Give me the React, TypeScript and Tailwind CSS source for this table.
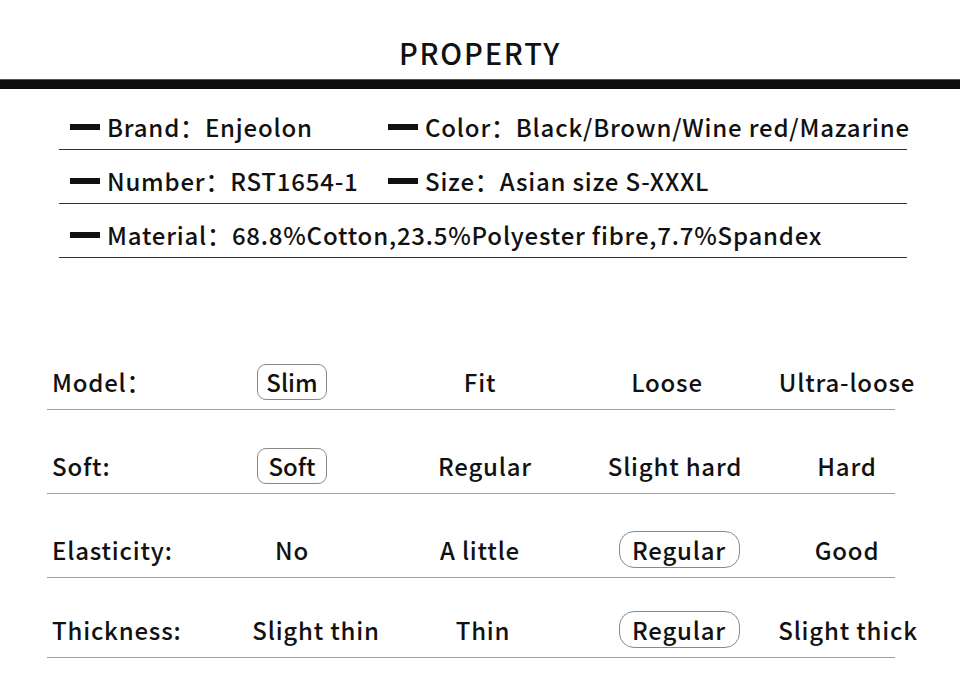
const font = { fontFamily: '"Noto Sans CJK SC", "Noto Sans", sans-serif' };

type Info = { label: string; value: string };

const infoRows: Info[][] = [
  [
    { label: "Brand", value: "Enjeolon" },
    { label: "Color", value: "Black/Brown/Wine red/Mazarine" },
  ],
  [
    { label: "Number", value: "RST1654-1" },
    { label: "Size", value: "Asian size S-XXXL" },
  ],
  [{ label: "Material", value: "68.8%Cotton,23.5%Polyester fibre,7.7%Spandex" }],
];

type Cell = { text: string; pill?: "sm" | "lg"; shift?: string };

const specRows: { label: string; cells: Cell[] }[] = [
  {
    label: "Model：",
    cells: [{ text: "Slim", pill: "sm" }, { text: "Fit" }, { text: "Loose", shift: "pr-[16px]" }, { text: "Ultra-loose" }],
  },
  {
    label: "Soft:",
    cells: [{ text: "Soft", pill: "sm" }, { text: "Regular", shift: "pl-[10px]" }, { text: "Slight hard" }, { text: "Hard" }],
  },
  {
    label: "Elasticity:",
    cells: [{ text: "No" }, { text: "A little" }, { text: "Regular", pill: "lg", shift: "pl-[8px]" }, { text: "Good" }],
  },
  {
    label: "Thickness:",
    cells: [{ text: "Slight thin", shift: "pl-[48px]" }, { text: "Thin", shift: "pl-[6px]" }, { text: "Regular", pill: "lg", shift: "pl-[8px]" }, { text: "Slight thick", shift: "pl-[2px]" }],
  },
];

function Dash() {
  return <span className="inline-block w-[30px] h-[6px] bg-[#111] mr-[7px] shrink-0" />;
}

function Value({ cell }: { cell: Cell }) {
  if (cell.pill === "sm") {
    return (
      <span className="flex items-center justify-center w-[70px] h-[36px] rounded-[9px] border-[1.5px] border-[#8a8a8a] tracking-normal">
        {cell.text}
      </span>
    );
  }
  if (cell.pill === "lg") {
    return (
      <span className="flex items-center justify-center w-[121px] h-[37px] rounded-[15px] border-[1.5px] border-[#8a8a8a]">
        {cell.text}
      </span>
    );
  }
  return <span>{cell.text}</span>;
}

export default function App() {
  return (
    <div className="w-[960px] h-[684px] bg-white text-[#111] overflow-hidden" style={font}>
      {/* Title */}
      <div className="h-[79px] flex items-center justify-center pt-[26px]">
        <h1 className="text-[29px] font-medium tracking-[1.8px] leading-none">PROPERTY</h1>
      </div>
      <div className="h-[10px] bg-[#0c0c0c] border-t border-[#555]" />

      {/* Basic info */}
      <div className="ml-[59px] w-[848px] mt-[7px]">
        {infoRows.map((row, i) => (
          <div key={i} className="h-[54px] flex items-end pb-[4px] border-b-[1.5px] border-[#333] text-[24px] font-medium tracking-[0.8px]">
            {row.map((item, j) => (
              <div key={j} className={`flex items-center pl-[11px] shrink-0 ${j === 0 ? "w-[318px]" : ""}`}>
                <Dash />
                <span className="whitespace-nowrap">
                  {item.label}：{item.value}
                </span>
              </div>
            ))}
          </div>
        ))}
      </div>

      {/* Spec table */}
      <div className="ml-[47px] w-[848px] mt-[69px]">
        {specRows.map((row, i) => (
          <div
            key={i}
            className={`${i === 3 ? "h-[80px]" : i === 0 ? "h-[83px]" : "h-[84px]"} grid grid-cols-[150px_190px_186px_204px_140px] items-end pb-[9px] border-b-[1.5px] border-[#a0a0a0] text-[24px] font-medium tracking-[0.8px]`}
          >
            <div className="pl-[5px] h-[37px] flex items-center whitespace-nowrap">{row.label}</div>
            {row.cells.map((cell, j) => (
              <div key={j} className={`h-[37px] flex items-center justify-center whitespace-nowrap ${cell.shift ?? ""}`}>
                <Value cell={cell} />
              </div>
            ))}
          </div>
        ))}
      </div>
    </div>
  );
}
